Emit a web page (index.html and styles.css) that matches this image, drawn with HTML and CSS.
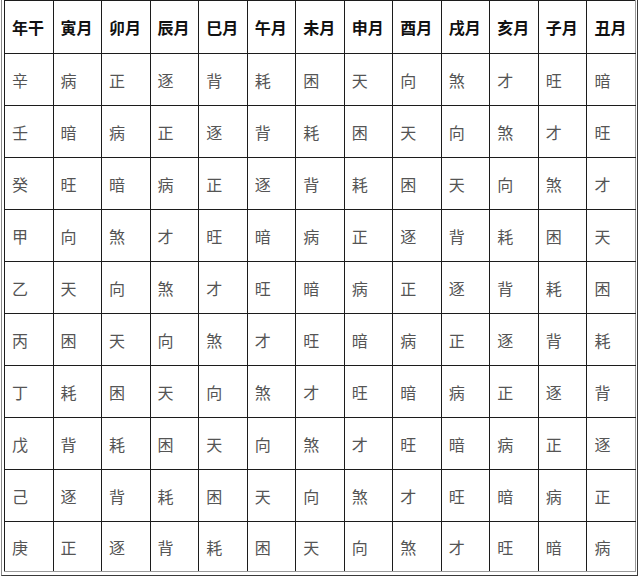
FILE: index.html
```html
<!DOCTYPE html>
<html lang="zh-CN">
<head>
<meta charset="utf-8">
<title>月份表</title>
<link rel="stylesheet" href="styles.css">
</head>
<body>
<div class="frame">
<table class="grid">
<thead>
<tr class="head"><th>年干</th><th>寅月</th><th>卯月</th><th>辰月</th><th>巳月</th><th>午月</th><th>未月</th><th>申月</th><th>酉月</th><th>戌月</th><th>亥月</th><th>子月</th><th>丑月</th></tr>
</thead>
<tbody>
<tr><td>辛</td><td>病</td><td>正</td><td>逐</td><td>背</td><td>耗</td><td>困</td><td>天</td><td>向</td><td>煞</td><td>才</td><td>旺</td><td>暗</td></tr>
<tr><td>壬</td><td>暗</td><td>病</td><td>正</td><td>逐</td><td>背</td><td>耗</td><td>困</td><td>天</td><td>向</td><td>煞</td><td>才</td><td>旺</td></tr>
<tr><td>癸</td><td>旺</td><td>暗</td><td>病</td><td>正</td><td>逐</td><td>背</td><td>耗</td><td>困</td><td>天</td><td>向</td><td>煞</td><td>才</td></tr>
<tr><td>甲</td><td>向</td><td>煞</td><td>才</td><td>旺</td><td>暗</td><td>病</td><td>正</td><td>逐</td><td>背</td><td>耗</td><td>困</td><td>天</td></tr>
<tr><td>乙</td><td>天</td><td>向</td><td>煞</td><td>才</td><td>旺</td><td>暗</td><td>病</td><td>正</td><td>逐</td><td>背</td><td>耗</td><td>困</td></tr>
<tr><td>丙</td><td>困</td><td>天</td><td>向</td><td>煞</td><td>才</td><td>旺</td><td>暗</td><td>病</td><td>正</td><td>逐</td><td>背</td><td>耗</td></tr>
<tr><td>丁</td><td>耗</td><td>困</td><td>天</td><td>向</td><td>煞</td><td>才</td><td>旺</td><td>暗</td><td>病</td><td>正</td><td>逐</td><td>背</td></tr>
<tr><td>戊</td><td>背</td><td>耗</td><td>困</td><td>天</td><td>向</td><td>煞</td><td>才</td><td>旺</td><td>暗</td><td>病</td><td>正</td><td>逐</td></tr>
<tr><td>己</td><td>逐</td><td>背</td><td>耗</td><td>困</td><td>天</td><td>向</td><td>煞</td><td>才</td><td>旺</td><td>暗</td><td>病</td><td>正</td></tr>
<tr class="last"><td>庚</td><td>正</td><td>逐</td><td>背</td><td>耗</td><td>困</td><td>天</td><td>向</td><td>煞</td><td>才</td><td>旺</td><td>暗</td><td>病</td></tr>
</tbody>
</table>
</div>
</body>
</html>
```
FILE: styles.css
```css
html, body {
  margin: 0;
  padding: 0;
  background: #ffffff;
}

body {
  font-family: "Noto Sans CJK SC", "Noto Sans", sans-serif;
}

.frame {
  margin-left: 1px;
  box-sizing: border-box;
  width: 637px;
  height: 576px;
  padding: 0 1px 3px 2px;
  border-left: 1px solid #8a8a8a;
  border-right: 1px solid #3a3a3a;
  border-bottom: 1px solid #3a3a3a;
  border-top: none;
}

.grid {
  border-collapse: collapse;
  table-layout: fixed;
  width: 632px;
}

.grid th,
.grid td {
  border: 1px solid #1c1c1c;
  padding: 0 0 0 7px;
  text-align: left;
  vertical-align: middle;
  font-size: 16px;
  line-height: 20px;
  overflow: hidden;
  white-space: nowrap;
}

.grid th {
  font-weight: 700;
  color: #111111;
}

.grid td {
  font-weight: 400;
  color: #555555;
}

.grid tr {
  height: 52px;
}

.grid tr.head {
  height: 53px;
}

.grid tr.last {
  height: 50px;
}

.grid tr.last td {
  border-bottom-color: #9a9a9a;
}

.grid th:last-child,
.grid td:last-child {
  border-right-color: #9a9a9a;
}
```
